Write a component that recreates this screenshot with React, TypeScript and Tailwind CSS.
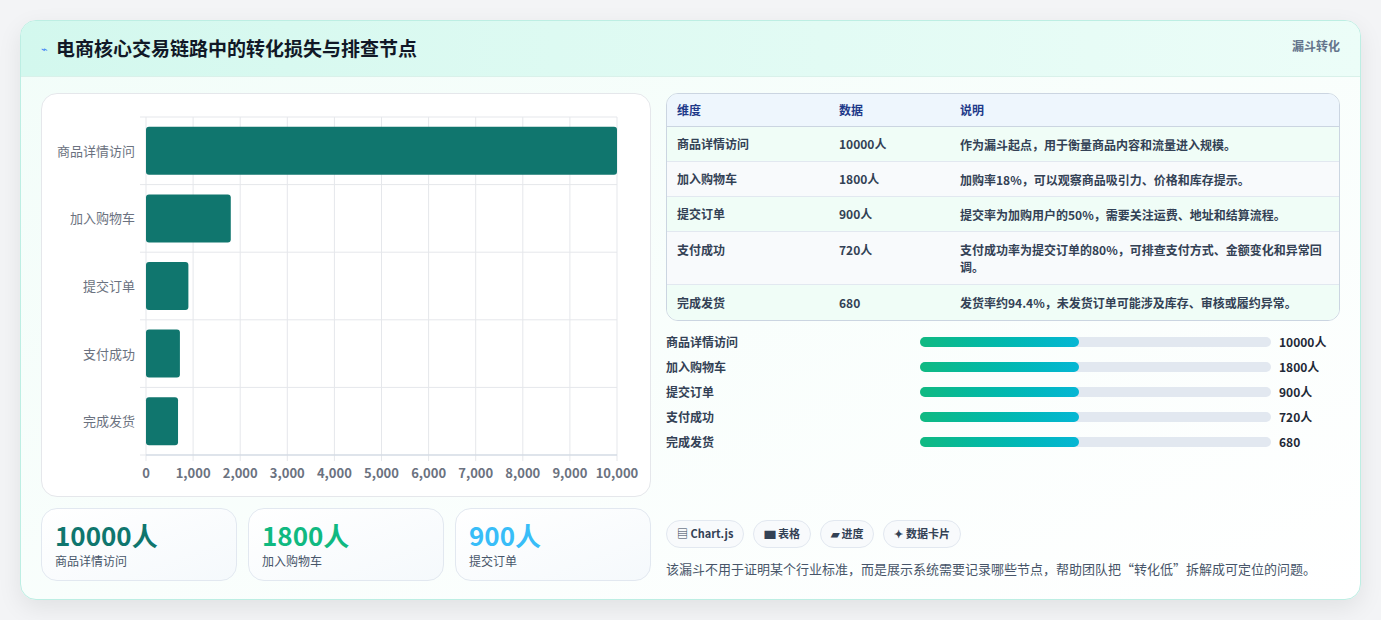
import React from 'react';

const font = { fontFamily: '"Noto Sans CJK SC", "Noto Sans", sans-serif' };

const rows = [
  { name: '商品详情访问', v: 10000, d: '10000人', note: '作为漏斗起点，用于衡量商品内容和流量进入规模。' },
  { name: '加入购物车', v: 1800, d: '1800人', note: '加购率18%，可以观察商品吸引力、价格和库存提示。' },
  { name: '提交订单', v: 900, d: '900人', note: '提交率为加购用户的50%，需要关注运费、地址和结算流程。' },
  { name: '支付成功', v: 720, d: '720人', note: '支付成功率为提交订单的80%，可排查支付方式、金额变化和异常回调。' },
  { name: '完成发货', v: 680, d: '680', note: '发货率约94.4%，未发货订单可能涉及库存、审核或履约异常。' },
];

const Chart = () => {
  const x0 = 104, x1 = 575, y0 = 23, y1 = 361;
  const step = (y1 - y0) / 5;
  return (
    <svg width="610" height="404" className="block">
      {Array.from({ length: 11 }).map((_, i) => {
        const x = x0 + ((x1 - x0) * i) / 10;
        return (
          <g key={i}>
            <line x1={x} x2={x} y1={y0} y2={y1 + 6} stroke="#e5e7eb" />
            <text x={x} y={384} textAnchor="middle" fontSize="13" fill="#6b7280" fontWeight="600">
              {(i * 1000).toLocaleString('en-US')}
            </text>
          </g>
        );
      })}
      {Array.from({ length: 6 }).map((_, i) => (
        <line key={i} x1={x0 - 6} x2={x1} y1={y0 + step * i} y2={y0 + step * i} stroke="#e5e7eb" />
      ))}
      <line x1={x0} x2={x1} y1={y1} y2={y1} stroke="#cbd5e1" />
      {rows.map((r, i) => {
        const cy = y0 + step * i + step / 2;
        return (
          <g key={r.name}>
            <rect x={x0} y={cy - 24} width={((x1 - x0) * r.v) / 10000} height={48} rx={3} fill="#10766e" />
            <text x={x0 - 11} y={cy + 5} textAnchor="end" fontSize="13" fill="#6b7280">{r.name}</text>
          </g>
        );
      })}
    </svg>
  );
};

export default function App() {
  return (
    <div className="w-[1381px] h-[620px] bg-[#f3f4f6] p-5 pb-0" style={font}>
      <div className="h-[580px] rounded-2xl border border-[#bdeee3] bg-gradient-to-br from-[#f2fdf9] to-white shadow-[0_8px_24px_rgba(0,0,0,0.08)] overflow-hidden">
        <div className="h-14 flex items-center justify-between px-5 bg-gradient-to-r from-[#d3f8ee] to-[#ecfdf8] border-b border-[#d9f1ea]">
          <div className="flex items-center gap-2">
            <span className="text-[11px] text-[#3b82f6]">⌁</span>
            <h1 className="text-[19px] font-bold text-[#111827]">电商核心交易链路中的转化损失与排查节点</h1>
          </div>
          <span className="text-[12px] font-semibold text-[#64748b] self-start mt-4">漏斗转化</span>
        </div>
        <div className="flex gap-[15px] px-5 pt-4">
          <div className="w-[610px] flex flex-col gap-[11px]">
            <div className="h-[404px] rounded-2xl border border-[#e5e7eb] bg-white">
              <Chart />
            </div>
            <div className="grid grid-cols-3 gap-[11px]">
              {[
                ['10000人', 'text-[#0f766e]', '商品详情访问'],
                ['1800人', 'text-[#10b981]', '加入购物车'],
                ['900人', 'text-[#38bdf8]', '提交订单'],
              ].map(([v, c, l]) => (
                <div key={l} className="h-[73px] rounded-2xl border border-[#e2e8f0] bg-gradient-to-br from-white to-[#f5f9fc] px-[13px] pt-[9px]">
                  <div className={`text-[26px] font-bold leading-[34px] ${c}`}>{v}</div>
                  <div className="text-[12px] text-[#475569]">{l}</div>
                </div>
              ))}
            </div>
          </div>
          <div className="flex-1 flex flex-col">
            <div className="rounded-xl border border-[#cbd5e1] overflow-hidden text-[12px]">
              <div className="grid grid-cols-[162px_121px_1fr] h-[33px] items-center bg-[#eef6fd] px-[10px] font-bold text-[#1e3a8a] border-b border-[#cbd5e1]">
                <span>维度</span><span>数据</span><span>说明</span>
              </div>
              {rows.map((r, i) => (
                <div
                  key={r.name}
                  className={`grid grid-cols-[162px_121px_1fr] px-[10px] font-semibold text-[#334155] border-b border-[#e2e8f0] last:border-b-0 ${i === 3 ? 'py-[9px] items-start' : 'h-[35px] items-center'} ${i % 2 ? 'bg-[#f8fafc]' : 'bg-[#f0fdf7]'}`}
                >
                  <span>{r.name}</span><span>{r.d}</span><span className="leading-[17px]">{r.note}</span>
                </div>
              ))}
            </div>
            <div className="mt-[12px] flex flex-col gap-[8px]">
              {rows.map((r) => (
                <div key={r.name} className="flex items-center h-[17px] text-[12px] font-semibold text-[#334155]">
                  <span className="w-[254px]">{r.name}</span>
                  <div className="w-[351px] h-[10px] rounded-full bg-[#e2e8f0]">
                    <div className="w-[159px] h-full rounded-full bg-gradient-to-r from-[#10b981] to-[#06b6d4]" />
                  </div>
                  <span className="ml-2 font-bold text-[#1f2937]">{r.d}</span>
                </div>
              ))}
            </div>
            <div className="mt-auto">
              <div className="flex gap-[9px] text-[11px] font-semibold text-[#334155]">
                {['▤ Chart.js', '▆ 表格', '▰ 进度', '✦ 数据卡片'].map((t) => (
                  <span key={t} className="h-7 px-[10px] flex items-center rounded-full border border-[#e2e8f0] bg-[#f8fafc]">{t}</span>
                ))}
              </div>
              <p className="mt-[11px] mb-[3px] text-[13px] text-[#475569]">
                该漏斗不用于证明某个行业标准，而是展示系统需要记录哪些节点，帮助团队把“转化低”拆解成可定位的问题。
              </p>
            </div>
          </div>
        </div>
      </div>
    </div>
  );
}
